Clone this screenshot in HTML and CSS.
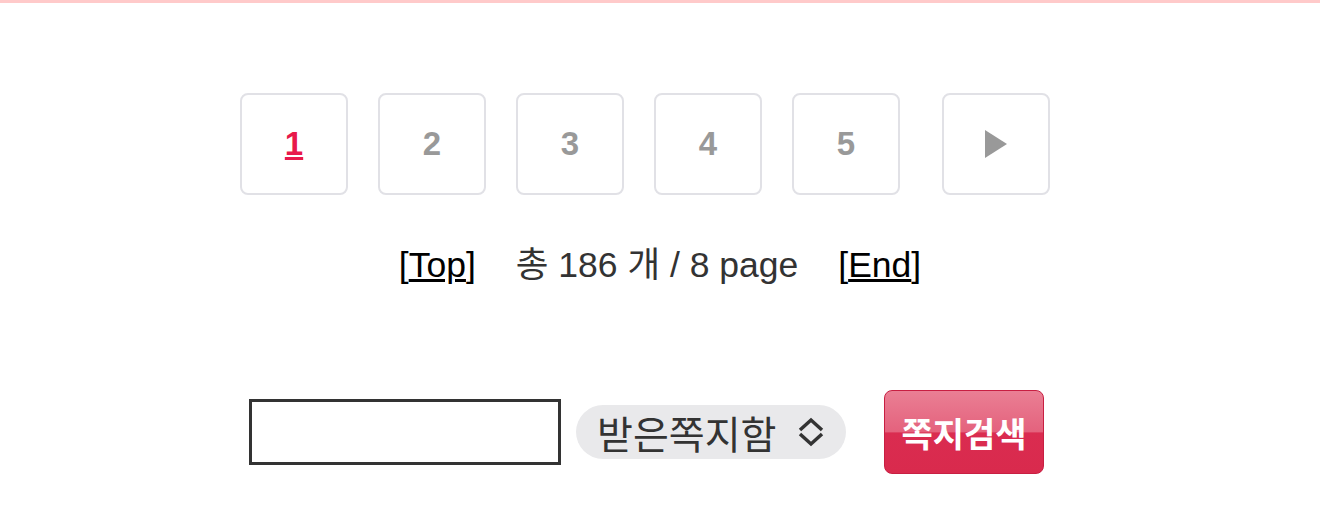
FILE: index.html
```html
<!DOCTYPE html>
<html lang="ko">
<head>
    <meta charset="UTF-8">
    <meta name="viewport" content="width=device-width, initial-scale=1.0">
    <title>쪽지함</title>
    <link rel="stylesheet" href="styles.css">
</head>
<body>
    <div class="paging">
        <a href="#" class="page-box current">1</a>
        <a href="#" class="page-box">2</a>
        <a href="#" class="page-box">3</a>
        <a href="#" class="page-box">4</a>
        <a href="#" class="page-box">5</a>
        <a href="#" class="page-box next">
            <svg width="22" height="28" viewBox="0 0 22 28"><polygon points="0,0 22,14 0,28" fill="#999999"/></svg>
        </a>
    </div>
    <div class="page-info">
        <span>[<a href="#">Top</a>]</span>
        <span class="total">총 186 개 / 8 page</span>
        <span>[<a href="#">End</a>]</span>
    </div>
    <form class="search-row" onsubmit="return false;">
        <input type="text" class="search-input">
        <div class="select-box">
            <span>받은쪽지함</span>
            <svg width="28" height="30" viewBox="0 0 28 30"><polyline points="3,13 14,3 25,13" fill="none" stroke="#333" stroke-width="3.5"/><polyline points="3,17 14,27 25,17" fill="none" stroke="#333" stroke-width="3.5"/></svg>
        </div>
        <button type="submit" class="search-btn">쪽지검색</button>
    </form>
</body>
</html>
```

FILE: styles.css
```css
body {
    margin: 0;
    border-top: 3px solid #ffcaca;
    font-family: "Liberation Sans", "Noto Sans CJK KR", sans-serif;
    color: #333333;
    background: #ffffff;
}
.paging {
    display: flex;
    justify-content: center;
    gap: 30px;
    margin-top: 90px;
    padding-right: 30px;
}
.page-box {
    display: flex;
    align-items: center;
    justify-content: center;
    width: 104px;
    height: 98px;
    border: 2px solid #e1e1e6;
    border-radius: 8px;
    font-size: 33px;
    font-weight: bold;
    color: #999999;
    text-decoration: none;
}
.page-box.current {
    color: #e8194b;
    text-decoration: underline;
}
.page-box.next {
    margin-left: 12px;
}
.page-info {
    display: flex;
    justify-content: center;
    gap: 40px;
    margin-top: 50px;
    font-size: 35.5px;
    line-height: 40px;
    color: #000000;
}
.page-info a {
    color: #000000;
}
.page-info .total {
    color: #333333;
}
.search-row {
    display: flex;
    justify-content: center;
    align-items: center;
    margin: 105px 0 0;
    padding-right: 27px;
}
.search-input {
    box-sizing: border-box;
    width: 312px;
    height: 66px;
    margin: 0;
    border: 3px solid #333333;
    background: #ffffff;
}
.select-box {
    display: flex;
    align-items: center;
    justify-content: space-between;
    box-sizing: border-box;
    width: 270px;
    height: 54px;
    margin-left: 15px;
    padding: 0 21px 0 21px;
    border-radius: 27px;
    background: #e9e9eb;
    font-size: 39px;
    color: #333333;
}
.search-btn {
    box-sizing: border-box;
    width: 160px;
    height: 84px;
    margin-left: 38px;
    padding: 0;
    border: 1px solid #c81f42;
    border-radius: 8px;
    background: linear-gradient(#ea7f94, #e4627d 50%, #da2c50 51%, #d92a4d);
    font-family: "Noto Sans CJK KR", sans-serif;
    font-size: 34px;
    font-weight: bold;
    color: #ffffff;
}
```
